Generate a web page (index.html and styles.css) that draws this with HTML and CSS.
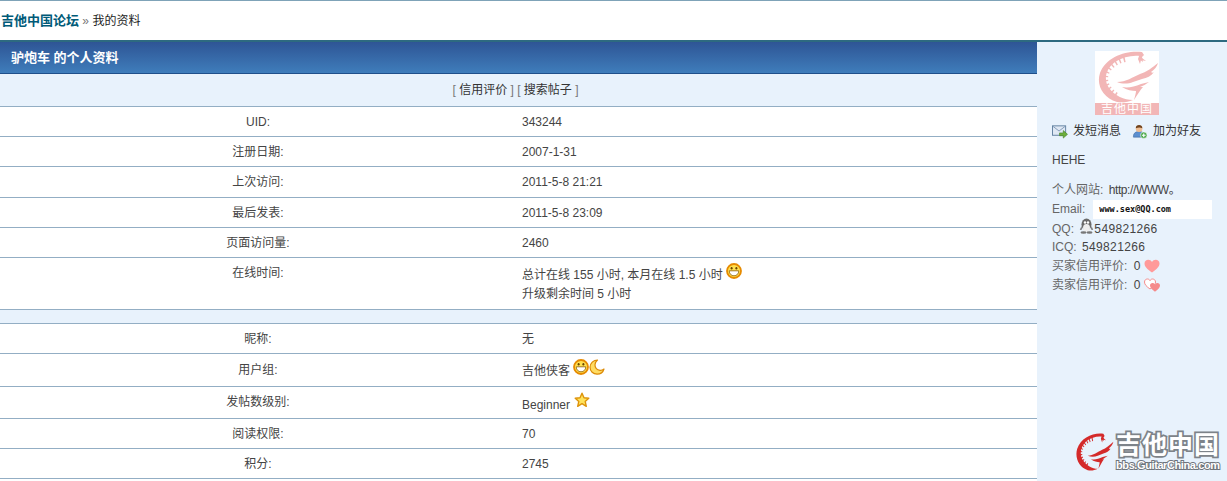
FILE: index.html

```html
<!DOCTYPE html>
<html lang="en">
<head>
    <meta charset="UTF-8" />
    <title>我的资料</title>
    <link rel="stylesheet" href="styles.css">
</head>
<body>
    <div class="nav">
        <a class="nav-home" href="#">吉他中国论坛</a> <span class="nav-sep">»</span> 我的资料
    </div>

    <div class="wrap">
        <div class="main">
            <h1 class="title">驴炮车 的个人资料</h1>
            <div class="tabs"><span class="br">[</span> 信用评价 <span class="br">]</span> <span class="br">[</span> 搜索帖子 <span class="br">]</span></div>

            <div class="row h30"><div class="label">UID:</div><div class="value">343244</div></div>
            <div class="row h30"><div class="label">注册日期:</div><div class="value">2007-1-31</div></div>
            <div class="row h30"><div class="label">上次访问:</div><div class="value">2011-5-8 21:21</div></div>
            <div class="row h30"><div class="label">最后发表:</div><div class="value">2011-5-8 23:09</div></div>
            <div class="row h30"><div class="label">页面访问量:</div><div class="value">2460</div></div>
            <div class="row online">
                <div class="label">在线时间:</div>
                <div class="value">
                    <div>总计在线 155 小时, 本月在线 1.5 小时
                        <svg class="icon smile" viewBox="0 0 16 16"><use href="#smile"/></svg>
                    </div>
                    <div>升级剩余时间 5 小时</div>
                </div>
            </div>
            <div class="spacer"></div>
            <div class="row h30"><div class="label">昵称:</div><div class="value">无</div></div>
            <div class="row group">
                <div class="label">用户组:</div>
                <div class="value">吉他侠客
                    <svg class="icon smile" viewBox="0 0 16 16"><use href="#smile"/></svg><svg class="icon moon" viewBox="0 0 16 16"><path d="M8.500 1C4.500 1 1 4.200 1 8.300c0 4 3.300 6.900 7.100 6.900 3.300 0 6-2.100 6.900-5.200-1.100.9-2.500 1.400-4 1.300C8 11.100 5.800 8.700 6 5.800 6.100 3.900 7 2.200 8.500 1Z" fill="#ffdc62" stroke="#dc8a06" stroke-width="1.200" stroke-linejoin="round"/></svg>
                </div>
            </div>
            <div class="row level">
                <div class="label">发帖数级别:</div>
                <div class="value">Beginner
                    <svg class="icon star" viewBox="0 0 16 16"><path d="M8 1.200 10 5.700 14.800 6.200 11.200 9.400 12.300 14.300 8 11.700 3.700 14.300 4.800 9.400 1.200 6.200 6 5.700Z" fill="#ffe35c" stroke="#dd930a" stroke-width="1.400" stroke-linejoin="round"/></svg>
                </div>
            </div>
            <div class="row h30"><div class="label">阅读权限:</div><div class="value">70</div></div>
            <div class="row h30 last"><div class="label">积分:</div><div class="value">2745</div></div>
        </div>

        <div class="side">
            <div class="avatar">
                <svg class="avatar-art" viewBox="0 0 64 52"><use href="#dragon"/></svg>
                <div class="avatar-band">吉他中国</div>
            </div>

            <div class="actions">
                <span class="action">
                    <svg class="action-icon" viewBox="0 0 17 15"><rect x="0.500" y="1.500" width="14" height="10" fill="#dfe8f4" stroke="#5f7f9f"/><path d="M1 2l6.500 5L14 2" fill="none" stroke="#7f99b5"/><path d="M8 9h4V6.500l4.500 4-4.500 4V12H8Z" fill="#6dae3c" stroke="#3f7f20" stroke-width="0.600"/></svg>
                    发短消息
                </span>
                <span class="action">
                    <svg class="action-icon" viewBox="0 0 16 16"><path d="M1 13c0-3 2-5 6-5s6 2 6 5v1H1Z" fill="#5b8fd0" stroke="#3a659c" stroke-width="0.600"/><circle cx="7" cy="5" r="3.500" fill="#eebd92"/><path d="M3.500 4.500C3.500 2 5 1 7 1s3.500 1 3.500 3.500C8.500 3.500 6 3.500 3.500 4.500Z" fill="#70421c"/><circle cx="12" cy="12" r="3.500" fill="#4aa84a" stroke="#fff" stroke-width="0.600"/><path d="M12 10v4M10 12h4" stroke="#fff" stroke-width="1.200"/></svg>
                    加为好友
                </span>
            </div>

            <div class="signature">HEHE</div>

            <ul class="info">
                <li><span class="key">个人网站:</span> <span class="site-url">http://WWW。</span></li>
                <li class="mail"><span class="key">Email:</span> <span class="mail-box">www.sex@QQ.com</span></li>
                <li class="qq"><span class="key">QQ:</span>
                    <svg class="qq-icon" viewBox="0 0 15 16"><ellipse cx="7.500" cy="6.500" rx="5" ry="6" fill="#6a6a6a"/><ellipse cx="7.500" cy="10" rx="3.500" ry="4" fill="#eee"/><circle cx="6" cy="4.500" r="1.200" fill="#fff"/><circle cx="9" cy="4.500" r="1.200" fill="#fff"/><path d="M2.500 8 .800 12l2.200-.5M12.500 8l1.700 4-2.200-.5" fill="#6a6a6a"/><ellipse cx="4.500" cy="14.500" rx="3" ry="1.200" fill="#777"/><ellipse cx="10.500" cy="14.500" rx="3" ry="1.200" fill="#777"/></svg><span class="num">549821266</span>
                </li>
                <li><span class="key">ICQ:</span> <span class="num">549821266</span></li>
                <li><span class="key credit-key">买家信用评价:</span> 0
                    <svg class="heart" viewBox="0 0 16 14"><path d="M8 13.500C3 10 .5 7.500.5 4.500.5 2 2.400.800 4.200.800 5.800.800 7.200 1.700 8 3c.8-1.300 2.200-2.200 3.800-2.200 1.800 0 3.700 1.200 3.700 3.700 0 3-2.500 5.500-7.500 9Z" fill="#ff9a9a"/></svg>
                </li>
                <li><span class="key credit-key">卖家信用评价:</span> 0
                    <svg class="heart" viewBox="0 0 16 14"><path d="M6 11C2.500 8.500.5 6.500.5 4 .5 2 2 1 3.500 1 4.700 1 5.500 1.700 6 2.600 6.500 1.700 7.300 1 8.500 1 10 1 11.500 2 11.500 4c0 2.500-2 4.500-5.500 7Z" fill="#fff" stroke="#f58a8a"/><path d="M11 13.800C7.800 11.500 6 9.800 6 7.600 6 6 7.200 5 8.500 5c1.100 0 1.900.600 2.500 1.500C11.600 5.600 12.400 5 13.500 5 14.800 5 16 6 16 7.600c0 2.200-1.800 3.900-5 6.200Z" fill="#f58a8a"/></svg>
                </li>
            </ul>

            <div class="brand">
                <svg class="brand-art" viewBox="0 0 64 52" preserveAspectRatio="none"><use href="#dragon"/></svg>
                <div class="brand-text">
                    <div class="brand-cn">吉他中国</div>
                    <div class="brand-en">bbs.GuitarChina.com</div>
                </div>
            </div>
        </div>
    </div>

    <svg class="defs" width="0" height="0">
        <symbol id="smile" viewBox="0 0 16 16">
            <circle cx="8" cy="8" r="7" fill="#ffe14f" stroke="#e68a00" stroke-width="1.800"/>
            <ellipse cx="5.600" cy="5.200" rx="1" ry="1.300" fill="#6a4300"/>
            <ellipse cx="10.400" cy="5.200" rx="1" ry="1.300" fill="#6a4300"/>
            <path d="M3.200 7.800h9.600c0 3-2.200 5-4.800 5s-4.800-2-4.800-5Z" fill="#fff" stroke="#8a5a00" stroke-width="0.800"/>
        </symbol>
        <symbol id="dragon" viewBox="0 0 64 52">
            <path d="M47 1C31-1 11 6 5 22c-4 12 3 25 17 29 6 1 11 0 16-2-9 0-18-4-24-12-6-9-3-19 6-26 8-5 17-7 25-6l-1 3 4 3-1-5 2-2Z"/>
            <path d="M30 8C16 11 7 22 11 33c2 5 6 9 11 12" fill="none" stroke="currentColor" stroke-width="6" stroke-dasharray="1.500 3"/>
            <path d="M22 31c9 0 16-5 23-8 6-2 12-6 18-11-1 4-4 7-7 9 1 1 2 1 3 0-3 4-7 6-12 7l-9 3c-5 2-11 2-16 0Z"/>
            <path d="M27 36c6 1 12 0 19-3l8-2c-3 2-6 4-9 5l3 0c-3 3-5 7-9 13 1-4 2-7 2-9-4 0-9-1-14-4Z"/>
            <path d="M44 5l2-3 1 5 4 3-5-1-1 4-2-5Z"/>
        </symbol>
    </svg>
</body>
</html>
```

FILE: styles.css

```css
html, body {
    height: 481px;
    overflow: hidden;
}

body {
    margin: 0;
    background: #fff;
    color: #333;
    font-family: "Liberation Sans", "Noto Sans CJK SC", sans-serif;
    font-size: 12px;
}

.defs {
    display: none;
}

.nav {
    height: 40px;
    box-sizing: border-box;
    border-top: 1px solid #7fa3b8;
    padding-top: 11px;
    padding-left: 1px;
    line-height: 17px;
    color: #222;
}

.nav-home {
    color: #005a78;
    font-size: 13px;
    font-weight: bold;
    text-decoration: none;
}

.nav-sep {
    color: #777;
}

.wrap {
    display: flex;
    border-top: 2px solid #2d6a80;
    height: 439px;
}

.main {
    width: 1037px;
    flex: none;
}

.title {
    margin: 0;
    height: 32px;
    box-sizing: border-box;
    border-bottom: 1px solid #1f4f8a;
    padding-left: 11px;
    background: linear-gradient(#2e5595, #3f7dbb);
    color: #fff;
    font-size: 13px;
    font-weight: bold;
    line-height: 32px;
}

.tabs {
    height: 33px;
    box-sizing: border-box;
    border-bottom: 1px solid #93aec4;
    padding-right: 6px;
    background: #e8f2fc;
    text-align: center;
    line-height: 32px;
    color: #333;
}

.br {
    color: #777;
}

.row {
    display: grid;
    grid-template-columns: 516px 1fr;
    box-sizing: border-box;
    border-bottom: 1px solid #93aec4;
    line-height: 17px;
}

.label {
    padding-top: 7px;
    text-align: center;
    color: #444;
}

.value {
    padding-top: 7px;
    padding-left: 6px;
    color: #444;
}

.h30 {
    height: 30.2px;
}

.row.last {
    height: 30px;
}

.online {
    height: 52px;
}

.online .value {
    padding-top: 8px;
    line-height: 19px;
}

.group {
    height: 33px;
}

.group .label {
    padding-top: 8px;
}

.group .value {
    padding-top: 9px;
}

.level {
    height: 32px;
}

.level .value {
    padding-top: 10px;
}

.spacer {
    height: 14px;
    box-sizing: border-box;
    border-bottom: 1px solid #93aec4;
    background: #e8f2fc;
}

.icon {
    width: 16px;
    height: 16px;
    margin-top: -8px;
    vertical-align: 0;
}

.star {
    margin-left: 1px;
    vertical-align: 1px;
}

.side {
    flex: 1;
    background: #e8f2fc;
    position: relative;
    padding-left: 15px;
    color: #444;
}

.avatar {
    width: 64px;
    height: 64px;
    margin: 9px 0 0 43px;
    background: #fff;
    display: flex;
    flex-direction: column;
}

.avatar-art {
    width: 64px;
    height: 52px;
    display: block;
    color: #f2b6b6;
    fill: #f2b6b6;
}

.avatar-band {
    height: 12px;
    background: #f2b6b6;
    color: #fff;
    text-align: center;
    font-size: 12px;
    line-height: 12px;
    letter-spacing: 1px;
}

.actions {
    display: flex;
    gap: 11px;
    margin-top: 9px;
    line-height: 15px;
    color: #333;
}

.action {
    display: flex;
    align-items: center;
    gap: 5px;
}

.action-icon {
    width: 16px;
    height: 15px;
}

.signature {
    margin-top: 14px;
    line-height: 15px;
}

.info {
    list-style: none;
    margin: 13px 0 0;
    padding: 0;
    line-height: 19px;
}

.key {
    margin-right: 2px;
    color: #666;
}

.credit-key {
    margin-right: 3px;
}

.site-url {
    letter-spacing: -0.4px;
}

.num {
    letter-spacing: 0.35px;
}

.mail {
    display: flex;
    align-items: center;
    gap: 6px;
    height: 18px;
}

.mail-box {
    background: #fff;
    width: 119px;
    height: 19px;
    box-sizing: border-box;
    padding-left: 6px;
    color: #111;
    font-family: "DejaVu Sans Mono", monospace;
    font-size: 8.500px;
    font-weight: bold;
}

.qq {
    height: 18px;
    margin-top: 2px;
}

.qq .key {
    margin-right: 0;
}

.qq-icon {
    width: 15px;
    height: 16px;
    margin-left: 2px;
    margin-top: -4px;
    vertical-align: -1px;
}

.heart {
    width: 16px;
    height: 14px;
    margin-top: -4px;
    vertical-align: -3px;
}

.brand {
    position: absolute;
    left: 37px;
    top: 390px;
    display: flex;
    gap: 2px;
}

.brand-art {
    width: 40px;
    height: 38px;
    margin-top: 1px;
    color: #d42a2a;
    fill: #d42a2a;
}

.brand-cn {
    color: #fff;
    font-size: 25px;
    font-weight: bold;
    line-height: 27px;
    letter-spacing: 1px;
    -webkit-text-stroke: 3.500px #7d8389;
    paint-order: stroke fill;
    white-space: nowrap;
}

.brand-en {
    color: #fff;
    font-size: 11px;
    font-weight: bold;
    line-height: 12px;
    letter-spacing: -0.4px;
    -webkit-text-stroke: 2px #6f757c;
    paint-order: stroke fill;
    white-space: nowrap;
}
```
